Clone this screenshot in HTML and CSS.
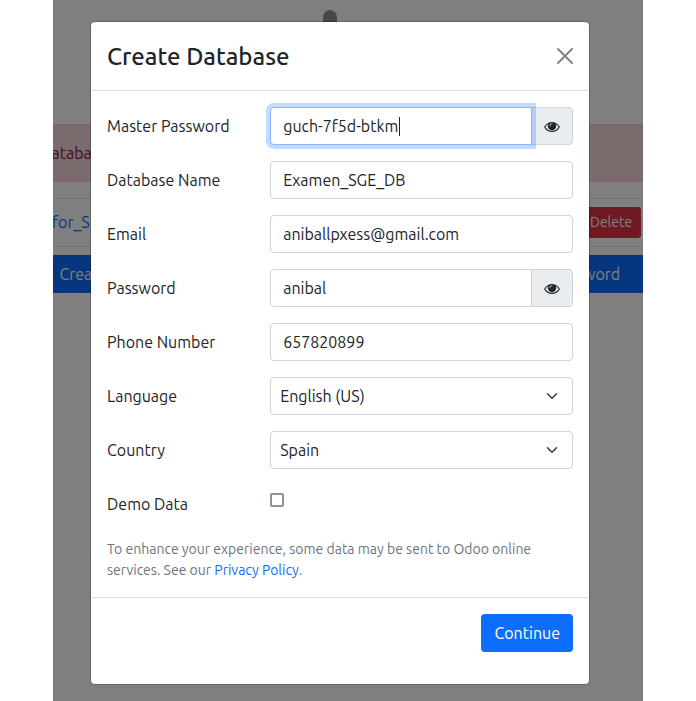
FILE: index.html
```html
<!DOCTYPE html>
<html lang="en">
<head>
<meta charset="utf-8">
<title>Create Database</title>
<link rel="stylesheet" href="styles.css">
</head>
<body>
<svg class="defs" width="0" height="0"><symbol id="eye" viewBox="0 0 16 12"><path fill-rule="evenodd" d="M8 .9C4.600.9 1.700 3 .200 5.700a.6.6 0 0 0 0 .600C1.700 9 4.600 11.100 8 11.100s6.300-2.100 7.800-4.800a.6.6 0 0 0 0-.600C14.300 3 11.400.9 8 .9ZM4.500 3A4.100 4.100 0 1 0 11.500 3C12.800 3.700 13.900 4.800 14.700 6 13.300 8.300 10.900 9.900 8 9.900S2.700 8.300 1.300 6C2.100 4.800 3.200 3.700 4.500 3ZM8 2.300c.6 0 .6.800 0 .800-.900 0-1.700.7-1.700 1.600 0 .6-.8.6-.8 0 0-1.300 1.200-2.400 2.500-2.400Z"/></symbol></svg>
<div class="viewport">
  <div class="page">
    <div class="logo"><span class="logo-stem"></span></div>
    <div class="alert">ataba</div>
    <div class="db-row"><a>for_S</a><span class="delete">Delete</span></div>
    <div class="actions"><span>Crea</span><span>word</span></div>
  </div>
  <div class="backdrop">
    <main class="modal">
      <header class="modal-header">
        <h1>Create Database</h1>
        <svg class="close" viewBox="0 0 16 16"><path d="M1 1 15 15M15 1 1 15"/></svg>
      </header>
      <form class="modal-body">
        <div class="row"><label>Master Password</label><div class="group"><div class="control focused"><span>guch-7f5d-btkm</span><i class="caret"></i></div><div class="addon"><svg><use href="#eye"/></svg></div></div></div>
        <div class="row"><label>Database Name</label><div class="control"><span>Examen_SGE_DB</span></div></div>
        <div class="row"><label>Email</label><div class="control"><span>aniballpxess@gmail.com</span></div></div>
        <div class="row"><label>Password</label><div class="group"><div class="control"><span>anibal</span></div><div class="addon"><svg><use href="#eye"/></svg></div></div></div>
        <div class="row"><label>Phone Number</label><div class="control"><span>657820899</span></div></div>
        <div class="row"><label>Language</label><div class="control select"><span>English (US)</span><svg class="chevron" viewBox="0 0 16 16"><path d="m2 5 6 6 6-6"/></svg></div></div>
        <div class="row"><label>Country</label><div class="control select"><span>Spain</span><svg class="chevron" viewBox="0 0 16 16"><path d="m2 5 6 6 6-6"/></svg></div></div>
        <div class="row"><label>Demo Data</label><i class="check"></i></div>
        <p class="note">To enhance your experience, some data may be sent to Odoo online<br>services. See our <a>Privacy Policy</a>.</p>
      </form>
      <footer class="modal-footer"><button type="button">Continue</button></footer>
    </main>
  </div>
</div>
</body>
</html>
```
FILE: styles.css
```css
* { box-sizing: border-box; }
body { margin: 0; background: #fff; color: #212529; font: 16px/24px Ubuntu, "Noto Sans", sans-serif; overflow: hidden; }
.defs { position: absolute; }
span { white-space: nowrap; }
.viewport { position: relative; width: 590px; height: 701px; margin-left: 53px; overflow: hidden; }
.page { height: 701px; }
.logo { height: 124px; padding: 10px 0 0 270.4px; }
.logo-stem { display: block; width: 14px; height: 30px; border-radius: 7px; background: #8f8f8f; }
.alert { height: 58px; padding: 16px 0; border: solid #f5c2c7; border-width: 1px 0; background: #f8d7da; color: #842029; text-indent: -1.5px; }
.db-row { display: flex; align-items: center; justify-content: space-between; height: 49px; margin-top: 16px; padding-right: 2px; border: solid #dee2e6; border-width: 1px 0; color: #0d6efd; }
.db-row a { margin: -2px 0 0 -1px; }
.delete { width: 60px; height: 31px; padding: 3px 9px; border-radius: 3px; background: #dc3545; color: #fff; font-size: 14px; text-align: right; }
.actions { display: flex; justify-content: space-between; height: 38px; margin-top: 8px; padding: 7px 22.8px 7px 6.4px; background: #0d6efd; color: #fff; }
.backdrop { position: absolute; inset: 0; padding: 21px 0 0 37px; background: rgba(0, 0, 0, .5); }
.modal { width: 500px; height: 664px; border: 1px solid rgba(0, 0, 0, .2); border-radius: 5px; background: #fff; background-clip: padding-box; }
.modal-header { display: flex; align-items: center; justify-content: space-between; height: 69px; padding: 0 16px; border-bottom: 1px solid #dee2e6; }
h1 { margin: 2px 0 0; font-size: 24px; line-height: 36px; font-weight: 500; }
.close { width: 16px; height: 16px; fill: none; stroke: #7f7f7f; stroke-width: 1.8; stroke-linecap: round; }
.modal-body { height: 506px; padding: 16px; }
.row { display: grid; grid-template-columns: 163px 303px; align-items: start; height: 38px; margin-bottom: 16px; }
label { padding-top: 7px; }
.control { display: flex; align-items: center; height: 38px; min-width: 0; padding: 0 12.2px; border: 1px solid #ced4da; border-radius: 4px; background: #fff; }
.select { justify-content: space-between; padding: 0 12px 0 9.2px; }
.group { display: flex; }
.group .control { width: 262px; border-radius: 4px 0 0 4px; }
.control.focused { position: relative; border-color: #86b7fe; box-shadow: 0 0 0 4px rgba(13, 110, 253, .25); }
.caret { width: 1px; height: 19px; margin-left: .4px; background: #212529; }
.addon { display: flex; align-items: center; justify-content: center; width: 42px; height: 38px; margin-left: -1px; border: 1px solid #ced4da; border-radius: 0 4px 4px 0; background: #e9ecef; }
.addon svg { width: 16px; height: 12px; margin-top: 1px; fill: #212529; }
.chevron { width: 16px; height: 12px; fill: none; stroke: #343a40; stroke-width: 2; stroke-linecap: round; stroke-linejoin: round; }
.check { width: 14px; height: 14px; margin-top: 8.4px; border: 2px solid #8f8f9d; border-radius: 2px; }
.note { margin: 0; font-size: 14px; line-height: 21px; color: #6c757d; }
.note a { color: #0d6efd; }
.modal-footer { display: flex; justify-content: flex-end; height: 87px; padding: 16px; border-top: 1px solid #dee2e6; }
button { width: 92px; height: 38px; padding: 0 0 0 .5px; border: 0; border-radius: 4px; background: #0d6efd; color: #fff; font: inherit; }
```
